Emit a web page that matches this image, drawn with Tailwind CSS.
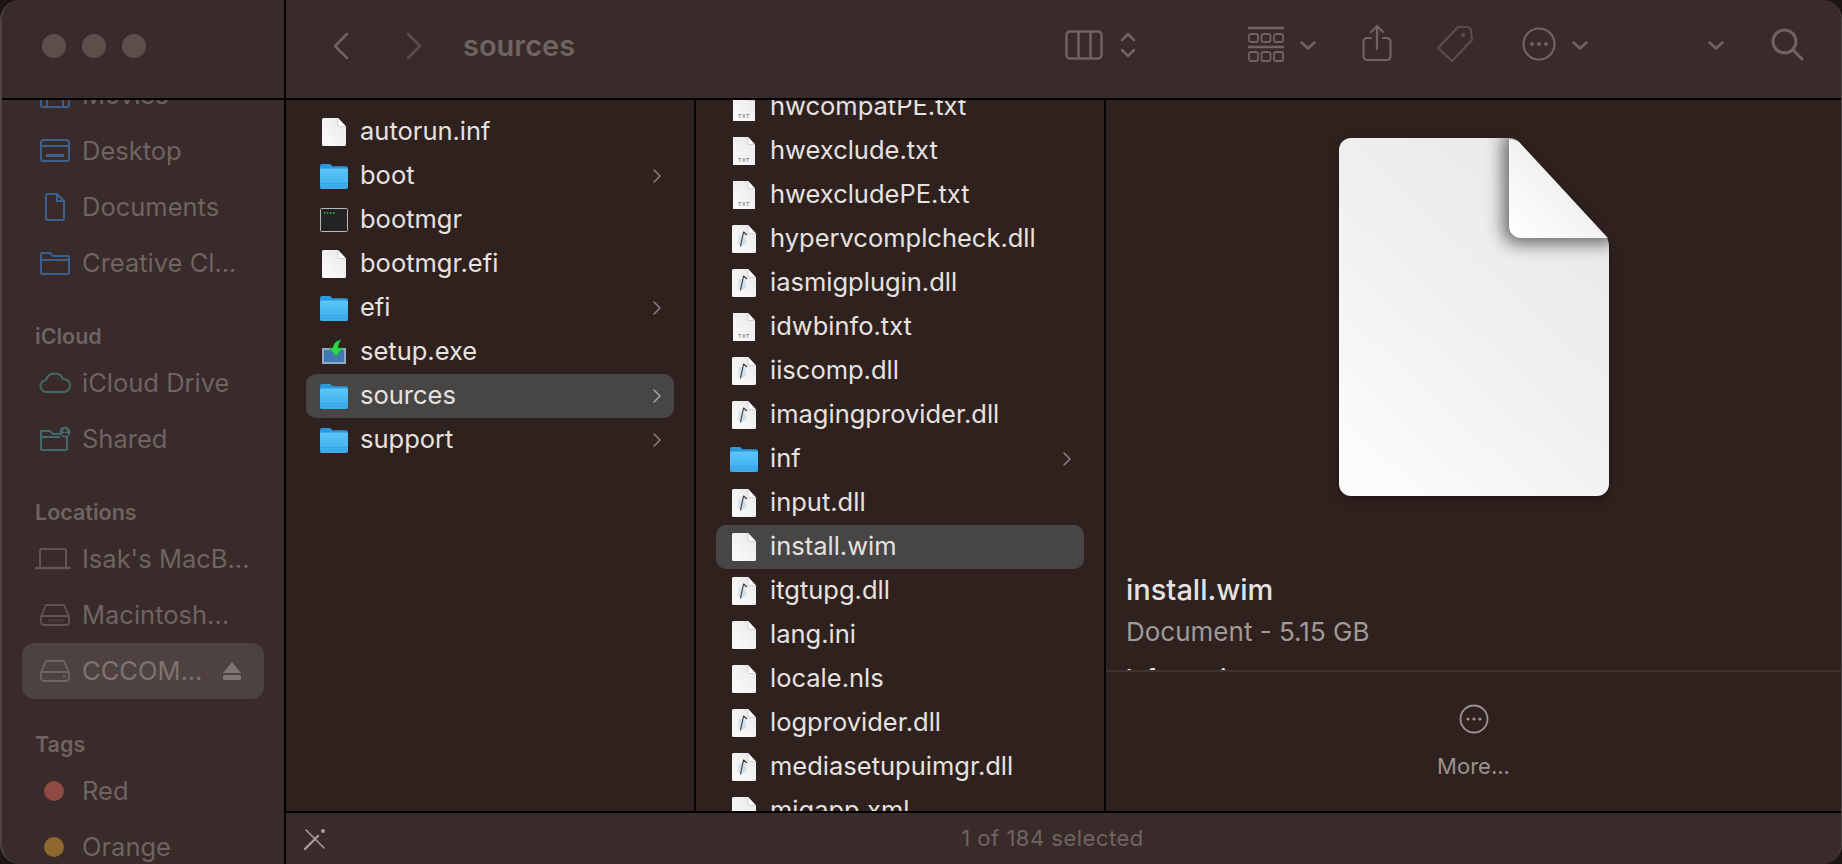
<!doctype html>
<html>
<head>
<meta charset="utf-8">
<script src="https://cdn.jsdelivr.net/npm/@tailwindcss/browser@4"></script>
<title>sources</title>
</head>
<body class="bg-[#1d1513] overflow-hidden">
<svg width="0" height="0" class="block h-0">
  <defs>
    <linearGradient id="folder-back" x1="0" y1="0" x2="0" y2="1"><stop offset="0" stop-color="#2c9be0"/><stop offset="1" stop-color="#1f86cf"/></linearGradient>
    <linearGradient id="folder-front" x1="0" y1="0" x2="0" y2="1"><stop offset="0" stop-color="#5cc6f7"/><stop offset="1" stop-color="#3aabec"/></linearGradient>
    <linearGradient id="page" x1="1" y1="0" x2="0" y2="1"><stop offset="0" stop-color="#e8e8e8"/><stop offset="1" stop-color="#fcfcfc"/></linearGradient>
    <linearGradient id="big-page" x1="0.85" y1="0" x2="0.15" y2="1"><stop offset="0" stop-color="#e8e8e8"/><stop offset="0.5" stop-color="#f0f0f0"/><stop offset="1" stop-color="#fcfcfc"/></linearGradient>
    <linearGradient id="big-fold" x1="0" y1="1" x2="1" y2="0"><stop offset="0" stop-color="#ffffff"/><stop offset="0.45" stop-color="#f4f4f4"/><stop offset="1" stop-color="#dcdcdc"/></linearGradient>
    <filter id="soft" x="-50%" y="-50%" width="200%" height="200%"><feGaussianBlur stdDeviation="9"/></filter>
    <clipPath id="page-clip"><path d="M12 0H170q6 0 10 4L266 97q4 5 4 12V346a12 12 0 0 1-12 12H12a12 12 0 0 1-12-12V12A12 12 0 0 1 12 0z"/></clipPath>
    <symbol id="i-folder" viewBox="0 0 28 26">
      <path d="M0 3a2 2 0 0 1 2-2h7c1 0 1.500.4 2.200 1l1.300 1.200H26a2 2 0 0 1 2 2V24a2 2 0 0 1-2 2H2a2 2 0 0 1-2-2z" fill="url(#folder-back)"/>
      <path d="M0 7a1.500 1.500 0 0 1 1.500-1.500h25A1.500 1.500 0 0 1 28 7v17a2 2 0 0 1-2 2H2a2 2 0 0 1-2-2z" fill="url(#folder-front)"/>
      <path d="M0 20.500h28M0 23h28" stroke="#2a90d8" stroke-width=".6" opacity=".7"/>
    </symbol>
    <symbol id="i-file" viewBox="0 0 24 28">
      <path d="M1.500 0H16l8 8.500V26.500A1.500 1.500 0 0 1 22.500 28h-21A1.500 1.500 0 0 1 0 26.500V1.500A1.500 1.500 0 0 1 1.500 0z" fill="url(#page)"/>
      <path d="M16 0l8 8.500h-6.500A1.500 1.500 0 0 1 16 7z" fill="#fff"/>
      <path d="M16 0v7a1.500 1.500 0 0 0 1.500 1.500H24" fill="none" stroke="#bbb" stroke-width=".6"/>
    </symbol>
    <symbol id="i-txt" viewBox="0 0 24 30">
      <path d="M1 1H16l7 7.500V28.500a.5.500 0 0 1-.5.500h-21a.5.500 0 0 1-.5-.5z" fill="url(#page)"/>
      <path d="M16 1l7 7.500h-6a1 1 0 0 1-1-1z" fill="#fff"/>
      <path d="M16 1v6.500a1 1 0 0 0 1 1h6" fill="none" stroke="#bbb" stroke-width=".6"/>
      <path d="M3 4h2" stroke="#ccc" stroke-width=".6"/>
      <text x="12" y="25.500" text-anchor="middle" font-size="5.500" font-family="Liberation Sans" letter-spacing=".5" fill="#555">TXT</text>
    </symbol>
    <symbol id="i-dll" viewBox="0 0 24 28">
      <path d="M1.500 0H16l8 8.500V26.500A1.500 1.500 0 0 1 22.500 28h-21A1.500 1.500 0 0 1 0 26.500V1.500A1.500 1.500 0 0 1 1.500 0z" fill="url(#page)"/>
      <path d="M16 0l8 8.500h-6.500A1.500 1.500 0 0 1 16 7z" fill="#fff"/>
      <path d="M16 0v7a1.500 1.500 0 0 0 1.500 1.500H24" fill="none" stroke="#bbb" stroke-width=".6"/>
      <path d="M7 10l-1.500 9 4 2 5-2-1.500-9z" fill="#c8deeb" opacity=".75"/>
      <path d="M8.500 21.500L11.500 7l3.500 3" fill="none" stroke="#333" stroke-width="1.100" stroke-linejoin="round"/>
    </symbol>
    <symbol id="i-chev" viewBox="0 0 10 16"><path d="M2 2l6 6-6 6" fill="none" stroke="currentColor" stroke-width="1.500" stroke-linecap="round" stroke-linejoin="round"/></symbol>
    <symbol id="i-down" viewBox="0 0 16 9"><path d="M1.500 1.500L8 7.500l6.500-6" fill="none" stroke="currentColor" stroke-width="2.400" stroke-linecap="round" stroke-linejoin="round"/></symbol>
  </defs>
</svg>

<div class="w-[1842px] h-[864px] flex rounded-[20px] overflow-hidden bg-[#382b29] text-[#e6e2e0] font-['Inter','Liberation_Sans',sans-serif] border-l-2 border-r border-[#4e4442]">

  <!-- sidebar -->
  <aside class="w-[284px] shrink-0 flex flex-col border-r-2 border-black text-[#6f6461]">
    <div class="h-[100px] shrink-0 flex items-center gap-[16px] pl-[40px] pb-[6px] border-b-2 border-black bg-[#382b29] z-10">
      <span class="w-[24px] h-[24px] rounded-full bg-[#5c4f4b]"></span>
      <span class="w-[24px] h-[24px] rounded-full bg-[#5c4f4b]"></span>
      <span class="w-[24px] h-[24px] rounded-full bg-[#5c4f4b]"></span>
    </div>
    <nav class="flex-1 overflow-hidden text-[25.500px]">
      <div class="-mt-[33px] px-[20px]">
        <div class="h-[56px] flex items-center"><svg class="w-[32px] h-[28px] ml-[17px] mr-[11px] text-[#3d5f8c]" viewBox="0 0 32 28" fill="none" stroke="currentColor" stroke-width="2"><rect x="2" y="2" width="28" height="24" rx="2"/><path d="M8 2v24M24 2v24M2 18h28"/></svg>Movies</div>
        <div class="h-[56px] flex items-center"><svg class="w-[32px] h-[26px] ml-[17px] mr-[11px] text-[#3d5f8c]" viewBox="0 0 32 26" fill="none" stroke="currentColor" stroke-width="2"><rect x="2" y="2" width="28" height="21" rx="2.500"/><path d="M2 8h28"/><rect x="7" y="16" width="18" height="3" fill="currentColor" stroke="none"/></svg>Desktop</div>
        <div class="h-[56px] flex items-center"><svg class="w-[32px] h-[28px] ml-[17px] mr-[11px] text-[#3d5f8c]" viewBox="0 0 32 28" fill="none" stroke="currentColor" stroke-width="2"><path d="M7 3a2 2 0 0 1 2-2h9l7 7v17a2 2 0 0 1-2 2H9a2 2 0 0 1-2-2zM18 1v7h7"/></svg>Documents</div>
        <div class="h-[56px] flex items-center"><svg class="w-[32px] h-[26px] ml-[17px] mr-[11px] text-[#3d5f8c]" viewBox="0 0 32 26" fill="none" stroke="currentColor" stroke-width="2"><path d="M3 3h8l3 3h15a1 1 0 0 1 1 1v16a1 1 0 0 1-1 1H3a1 1 0 0 1-1-1V4a1 1 0 0 1 1-1zM2 10h28"/></svg>Creative Cl...</div>
        <div class="h-[50px] pt-[12px] pl-[13px] flex items-center text-[21.500px] font-semibold mt-[14px]">iCloud</div>
        <div class="h-[56px] flex items-center"><svg class="w-[32px] h-[24px] ml-[17px] mr-[11px] text-[#43696d]" viewBox="0 0 32 24" fill="none" stroke="currentColor" stroke-width="2"><path d="M8 21a6 6 0 0 1-1-12 9 9 0 0 1 17-1 6.500 6.500 0 0 1 1 13z"/></svg>iCloud Drive</div>
        <div class="h-[56px] flex items-center"><svg class="w-[32px] h-[28px] ml-[17px] mr-[11px] text-[#43696d]" viewBox="0 0 32 28" fill="none" stroke="currentColor" stroke-width="2"><path d="M2 6h9l3 3h14v15a1 1 0 0 1-1 1H3a1 1 0 0 1-1-1zM2 12h19"/><circle cx="26" cy="7" r="5.500" fill="currentColor" stroke="none"/><circle cx="26" cy="5.500" r="1.800" fill="#382b29" stroke="none"/><path d="M22.500 10.500a3.500 2.500 0 0 1 7 0z" fill="#382b29" stroke="none"/></svg>Shared</div>
        <div class="h-[50px] pt-[12px] pl-[13px] flex items-center text-[21.500px] font-semibold mt-[14px]">Locations</div>
        <div class="h-[56px] flex items-center"><svg class="w-[36px] h-[22px] ml-[13px] mr-[11px] text-[#5f5552]" viewBox="0 0 36 22" fill="none" stroke="currentColor" stroke-width="2"><path d="M5 19V3a2 2 0 0 1 2-2h22a2 2 0 0 1 2 2v16"/><path d="M0 20h36" stroke-width="2.500"/></svg>Isak's MacB...</div>
        <div class="h-[56px] flex items-center"><svg class="w-[32px] h-[24px] ml-[17px] mr-[11px] text-[#5f5552]" viewBox="0 0 32 24" fill="none" stroke="currentColor" stroke-width="1.800"><path d="M7 2h18l5 12v5a3 3 0 0 1-3 3H5a3 3 0 0 1-3-3v-5zM2 13h28"/><path d="M11 16v3M14 16v3M17 16v3M20 16v3M23 16v3" stroke-width="1"/></svg>Macintosh...</div>
        <div class="h-[56px] flex items-center bg-[#4e4240] rounded-[12px] text-[#7f7471]">
          <svg class="w-[32px] h-[24px] ml-[17px] mr-[11px] text-[#6f6461]" viewBox="0 0 32 24" fill="none" stroke="currentColor" stroke-width="1.800"><path d="M7 2h18l5 12v5a3 3 0 0 1-3 3H5a3 3 0 0 1-3-3v-5zM2 13h28"/><circle cx="25" cy="17.500" r="1.300" fill="currentColor" stroke="none"/></svg>
          <span>CCCOM...</span>
          <svg class="w-[20px] h-[20px] ml-[20px] text-[#7f7471]" viewBox="0 0 20 20" fill="currentColor"><path d="M10 1l9 11H1z"/><rect x="1" y="14" width="18" height="5" rx="1"/></svg>
        </div>
        <div class="h-[50px] pt-[12px] pl-[13px] flex items-center text-[21.500px] font-semibold mt-[14px]">Tags</div>
        <div class="h-[56px] flex items-center"><span class="w-[20px] h-[20px] rounded-full bg-[#8f4a44] ml-[22px] mr-[18px]"></span>Red</div>
        <div class="h-[56px] flex items-center"><span class="w-[20px] h-[20px] rounded-full bg-[#8f682f] ml-[22px] mr-[18px]"></span>Orange</div>
      </div>
    </nav>
  </aside>

  <div class="flex-1 flex flex-col min-w-0">
    <!-- toolbar -->
    <header class="h-[100px] shrink-0 flex items-center border-b-2 border-black text-[#6f6461] relative">
      <svg class="w-[16px] h-[28px] ml-[47px] mt-[-6px]" viewBox="0 0 16 28" fill="none" stroke="currentColor" stroke-width="2.500" stroke-linecap="round" stroke-linejoin="round"><path d="M14 2L2 14l12 12"/></svg>
      <svg class="w-[16px] h-[28px] ml-[57px] mt-[-6px] text-[#5a4e4b]" viewBox="0 0 16 28" fill="none" stroke="currentColor" stroke-width="2.500" stroke-linecap="round" stroke-linejoin="round"><path d="M2 2l12 12L2 26"/></svg>
      <span class="ml-[41px] text-[29px] font-semibold mt-[-7px] w-[602px]">sources</span>
      <svg class="w-[38px] h-[30px] mt-[-8px]" viewBox="0 0 38 30" fill="none" stroke="currentColor" stroke-width="2.500"><rect x="1.500" y="1.500" width="35" height="27" rx="3.500"/><path d="M13.500 1.500v27M25.500 1.500v27"/></svg>
      <svg class="w-[16px] h-[26px] ml-[17px] mt-[-8px]" viewBox="0 0 16 26" fill="none" stroke="currentColor" stroke-width="2.500" stroke-linecap="round" stroke-linejoin="round"><path d="M2 8l6-6 6 6M2 18l6 6 6-6"/></svg>
      <svg class="w-[36px] h-[36px] ml-[112px] mt-[-10px]" viewBox="0 0 36 36" fill="none" stroke="currentColor" stroke-width="1.800"><path d="M0 2h36M0 21h36" stroke-width="2.500"/><rect x="1" y="8" width="9" height="8" rx="2"/><rect x="13.500" y="8" width="9" height="8" rx="2"/><rect x="26" y="8" width="9" height="8" rx="2"/><rect x="1" y="26" width="9" height="9" rx="2"/><rect x="13.500" y="26" width="9" height="9" rx="2"/><rect x="26" y="26" width="9" height="9" rx="2"/></svg>
      <svg class="w-[16px] h-[9px] ml-[16px] mt-[-8px]" viewBox="0 0 16 9"><use href="#i-down"/></svg>
      <svg class="w-[30px] h-[38px] ml-[46px] mt-[-12px]" viewBox="0 0 30 38" fill="none" stroke="currentColor" stroke-width="2.200" stroke-linecap="round" stroke-linejoin="round"><path d="M9 14H5a3.500 3.500 0 0 0-3.500 3.500v15A3.500 3.500 0 0 0 5 36h20a3.500 3.500 0 0 0 3.500-3.500v-15A3.500 3.500 0 0 0 25 14h-4M15 25V2M9 8l6-6 6 6"/></svg>
      <svg class="w-[38px] h-[38px] ml-[44px] mt-[-10px] text-[#5a4e4b]" viewBox="0 0 38 38" fill="none" stroke="currentColor" stroke-width="2.200" stroke-linejoin="round"><path d="M22 2h9a4 4 0 0 1 4 4l1 9-20 21L2 23z"/><circle cx="27" cy="10" r="2" fill="currentColor" stroke="none"/></svg>
      <svg class="w-[34px] h-[34px] ml-[48px] mt-[-10px]" viewBox="0 0 34 34" fill="none" stroke="currentColor" stroke-width="2.200"><circle cx="17" cy="17" r="15.500"/><circle cx="10" cy="17" r="2" fill="currentColor" stroke="none"/><circle cx="17" cy="17" r="2" fill="currentColor" stroke="none"/><circle cx="24" cy="17" r="2" fill="currentColor" stroke="none"/></svg>
      <svg class="w-[16px] h-[9px] ml-[16px] mt-[-8px]" viewBox="0 0 16 9"><use href="#i-down"/></svg>
      <svg class="w-[16px] h-[9px] ml-[120px] mt-[-8px]" viewBox="0 0 16 9"><use href="#i-down"/></svg>
      <svg class="w-[33px] h-[33px] ml-[47px] mt-[-10px]" viewBox="0 0 33 33" fill="none" stroke="currentColor" stroke-width="3" stroke-linecap="round"><circle cx="13.500" cy="13.500" r="11.500"/><path d="M22 22l9 9"/></svg>
    </header>

    <!-- columns -->
    <div class="flex-1 flex min-h-0 bg-[#2f211e] text-[25.500px]">
      <div class="w-[410px] shrink-0 border-r-2 border-black overflow-hidden pt-[10px] px-[20px] [&_span]:-translate-y-px">
        <div class="h-[44px] flex items-center pl-[16px]"><svg class="w-[24px] h-[28px]"><use href="#i-file"/></svg><span class="ml-[14px]">autorun.inf</span></div>
        <div class="h-[44px] flex items-center pl-[14px]"><svg class="w-[28px] h-[26px]"><use href="#i-folder"/></svg><span class="ml-[12px] flex-1">boot</span><svg class="w-[10px] h-[16px] mr-[12px] text-[#8b8280]"><use href="#i-chev"/></svg></div>
        <div class="h-[44px] flex items-center pl-[14px]"><svg class="w-[28px] h-[24px]" viewBox="0 0 28 24"><rect x=".5" y=".5" width="27" height="23" rx="1" fill="#242322" stroke="#b9b9b9"/><path d="M4 5h1.500M7 5h1.500M10 5h1.500M13 5h1.500" stroke="#3fbf57" stroke-width="1.600"/></svg><span class="ml-[12px]">bootmgr</span></div>
        <div class="h-[44px] flex items-center pl-[16px]"><svg class="w-[24px] h-[28px]"><use href="#i-file"/></svg><span class="ml-[14px]">bootmgr.efi</span></div>
        <div class="h-[44px] flex items-center pl-[14px]"><svg class="w-[28px] h-[26px]"><use href="#i-folder"/></svg><span class="ml-[12px] flex-1">efi</span><svg class="w-[10px] h-[16px] mr-[12px] text-[#8b8280]"><use href="#i-chev"/></svg></div>
        <div class="h-[44px] flex items-center pl-[16px]"><svg class="w-[24px] h-[26px]" viewBox="0 0 24 26"><rect x="0" y="9" width="24" height="16" fill="#8fa9c4"/><rect x="2" y="11" width="20" height="12" fill="#3f78b4"/><path d="M19 1c-5 1-7 3-8 8H7l7 8 7-8h-5c0-3 1-6 3-8z" fill="#2fd84a" stroke="#1b9a30" stroke-width=".6"/></svg><span class="ml-[14px]">setup.exe</span></div>
        <div class="h-[44px] flex items-center pl-[14px] bg-[#474645] rounded-[10px]"><svg class="w-[28px] h-[26px]"><use href="#i-folder"/></svg><span class="ml-[12px] flex-1">sources</span><svg class="w-[10px] h-[16px] mr-[12px] text-[#a8a5a3]"><use href="#i-chev"/></svg></div>
        <div class="h-[44px] flex items-center pl-[14px]"><svg class="w-[28px] h-[26px]"><use href="#i-folder"/></svg><span class="ml-[12px] flex-1">support</span><svg class="w-[10px] h-[16px] mr-[12px] text-[#8b8280]"><use href="#i-chev"/></svg></div>
      </div>

      <div class="w-[410px] shrink-0 border-r-2 border-black overflow-hidden px-[20px] [&_span]:-translate-y-px">
        <div class="-mt-[15px]">
          <div class="h-[44px] flex items-center pl-[16px]"><svg class="w-[24px] h-[30px]"><use href="#i-txt"/></svg><span class="ml-[14px]">hwcompatPE.txt</span></div>
          <div class="h-[44px] flex items-center pl-[16px]"><svg class="w-[24px] h-[30px]"><use href="#i-txt"/></svg><span class="ml-[14px]">hwexclude.txt</span></div>
          <div class="h-[44px] flex items-center pl-[16px]"><svg class="w-[24px] h-[30px]"><use href="#i-txt"/></svg><span class="ml-[14px]">hwexcludePE.txt</span></div>
          <div class="h-[44px] flex items-center pl-[16px]"><svg class="w-[24px] h-[28px]"><use href="#i-dll"/></svg><span class="ml-[14px]">hypervcomplcheck.dll</span></div>
          <div class="h-[44px] flex items-center pl-[16px]"><svg class="w-[24px] h-[28px]"><use href="#i-dll"/></svg><span class="ml-[14px]">iasmigplugin.dll</span></div>
          <div class="h-[44px] flex items-center pl-[16px]"><svg class="w-[24px] h-[30px]"><use href="#i-txt"/></svg><span class="ml-[14px]">idwbinfo.txt</span></div>
          <div class="h-[44px] flex items-center pl-[16px]"><svg class="w-[24px] h-[28px]"><use href="#i-dll"/></svg><span class="ml-[14px]">iiscomp.dll</span></div>
          <div class="h-[44px] flex items-center pl-[16px]"><svg class="w-[24px] h-[28px]"><use href="#i-dll"/></svg><span class="ml-[14px]">imagingprovider.dll</span></div>
          <div class="h-[44px] flex items-center pl-[14px]"><svg class="w-[28px] h-[26px]"><use href="#i-folder"/></svg><span class="ml-[12px] flex-1">inf</span><svg class="w-[10px] h-[16px] mr-[12px] text-[#8b8280]"><use href="#i-chev"/></svg></div>
          <div class="h-[44px] flex items-center pl-[16px]"><svg class="w-[24px] h-[28px]"><use href="#i-dll"/></svg><span class="ml-[14px]">input.dll</span></div>
          <div class="h-[44px] flex items-center pl-[16px] bg-[#474645] rounded-[10px]"><svg class="w-[24px] h-[28px]"><use href="#i-file"/></svg><span class="ml-[14px]">install.wim</span></div>
          <div class="h-[44px] flex items-center pl-[16px]"><svg class="w-[24px] h-[28px]"><use href="#i-dll"/></svg><span class="ml-[14px]">itgtupg.dll</span></div>
          <div class="h-[44px] flex items-center pl-[16px]"><svg class="w-[24px] h-[28px]"><use href="#i-file"/></svg><span class="ml-[14px]">lang.ini</span></div>
          <div class="h-[44px] flex items-center pl-[16px]"><svg class="w-[24px] h-[28px]"><use href="#i-file"/></svg><span class="ml-[14px]">locale.nls</span></div>
          <div class="h-[44px] flex items-center pl-[16px]"><svg class="w-[24px] h-[28px]"><use href="#i-dll"/></svg><span class="ml-[14px]">logprovider.dll</span></div>
          <div class="h-[44px] flex items-center pl-[16px]"><svg class="w-[24px] h-[28px]"><use href="#i-dll"/></svg><span class="ml-[14px]">mediasetupuimgr.dll</span></div>
          <div class="h-[44px] flex items-center pl-[16px]"><svg class="w-[24px] h-[28px]"><use href="#i-file"/></svg><span class="ml-[14px]">migapp.xml</span></div>
        </div>
      </div>

      <!-- preview -->
      <div class="flex-1 flex flex-col min-w-0">
        <div class="h-[456px] shrink-0 flex justify-center pt-[38px]">
          <svg class="w-[270px] h-[358px] drop-shadow-[0_3px_4px_rgba(0,0,0,0.35)]" viewBox="0 0 270 358">
            <path d="M12 0H170q6 0 10 4L266 97q4 5 4 12V346a12 12 0 0 1-12 12H12a12 12 0 0 1-12-12V12A12 12 0 0 1 12 0z" fill="url(#big-page)"/>
            <g clip-path="url(#page-clip)">
              <path d="M170 -10H280V100H182a12 12 0 0 1-12-12z" transform="translate(-5 5)" fill="#000" opacity=".6" filter="url(#soft)"/>
            </g>
            <path d="M170 1q6 0 10 3L266 97q2 2 3 3H182a12 12 0 0 1-12-12z" fill="url(#big-fold)"/>
          </svg>
        </div>
        <div class="pl-[20px] h-[114px] overflow-hidden shrink-0">
          <div class="text-[29px] font-medium leading-[34px] mt-[17px]">install.wim</div>
          <div class="text-[26px] leading-[30px] mt-[10px] text-[#a09a98]">Document - 5.15 GB</div>
          <div class="text-[23px] font-semibold leading-[30px] mt-[16px]">Information</div>
        </div>
        <div class="flex-1 border-t-2 border-[#41322f] flex flex-col items-center pt-[32px] text-[#9a9391]">
          <svg class="w-[30px] h-[30px]" viewBox="0 0 30 30" fill="none" stroke="currentColor" stroke-width="1.800"><circle cx="15" cy="15" r="13.500"/><circle cx="9" cy="15" r="1.600" fill="currentColor" stroke="none"/><circle cx="15" cy="15" r="1.600" fill="currentColor" stroke="none"/><circle cx="21" cy="15" r="1.600" fill="currentColor" stroke="none"/></svg>
          <span class="text-[22px] mt-[19px] leading-[26px]">More...</span>
        </div>
      </div>
    </div>

    <!-- status bar -->
    <footer class="h-[53px] shrink-0 border-t-2 border-black flex items-center relative text-[#6f6461]">
      <svg class="w-[22px] h-[22px] ml-[18px] text-[#a69c99]" viewBox="0 0 22 22" fill="none" stroke="currentColor" stroke-linecap="round"><path d="M2 2l18 18" stroke-width="1.600"/><path d="M1 21L14 8" stroke-width="2.400"/><circle cx="19" cy="3" r="2" fill="currentColor" stroke="none"/></svg>
      <span class="absolute left-0 right-[22px] text-center text-[22px] tracking-[0.5px]">1 of 184 selected</span>
    </footer>
  </div>
</div>
</body>
</html>
